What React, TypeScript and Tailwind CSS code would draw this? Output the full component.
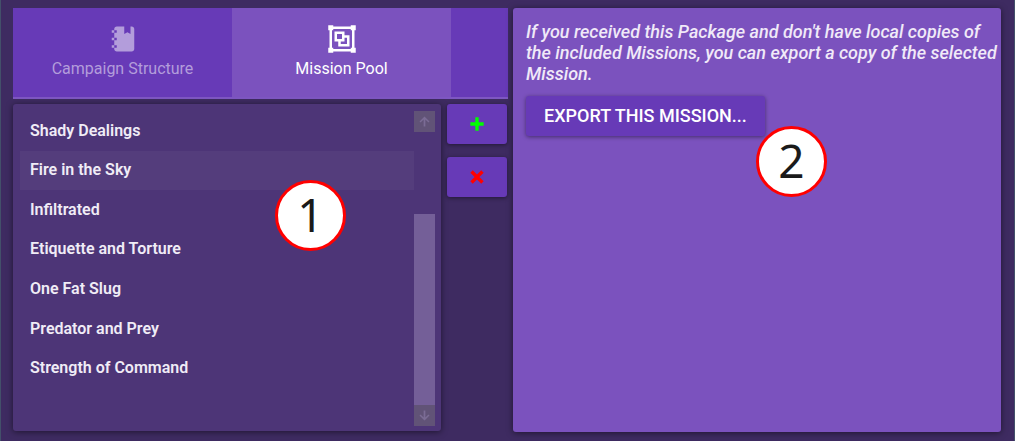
import { useState } from "react";

const missions = [
  "Shady Dealings",
  "Fire in the Sky",
  "Infiltrated",
  "Etiquette and Torture",
  "One Fat Slug",
  "Predator and Prey",
  "Strength of Command",
];

function Icon({ path, className }: { path: string; className: string }) {
  return (
    <svg viewBox="0 0 24 24" fill="currentColor" fillRule="evenodd" aria-hidden="true" className={className}>
      <path d={path} />
    </svg>
  );
}

const icons = {
  notebook:
    "M3,7V5H5V4C5,2.89 5.9,2 7,2H13V8L15.5,6.5L18,8V2H19C20.05,2 21,2.95 21,4V20C21,21.05 20.05,22 19,22H7C5.95,22 5,21.05 5,20V19H3V17H5V13H3V11H5V7H3M7,11H5V13H7V11M7,7V5H5V7H7M7,19V17H5V19H7Z",
  group:
    "M1,1H5V2H19V1H23V5H22V19H23V23H19V22H5V23H1V19H2V5H1V1M5,19V20H19V19H20V5H19V4H5V5H4V19H5M6,6H14V9H18V18H9V14H6V6M8,8V12H12V8H8M14,11V14H11V16H16V11H14Z",
  plus: "M20 14H14V20H10V14H4V10H10V4H14V10H20V14Z",
  close:
    "M20 6.91L17.09 4L12 9.09L6.91 4L4 6.91L9.09 12L4 17.09L6.91 20L12 14.91L17.09 20L20 17.09L14.91 12L20 6.91Z",
  up: "M13.4,20H10.6V8.8L5.7,13.7L4,12L12,4L20,12L18.3,13.7L13.4,8.8V20Z",
  down: "M10.6,4H13.4V15.2L18.3,10.3L20,12L12,20L4,12L5.7,10.3L10.6,15.2V4Z",
};

function Tab({ icon, label, active, onClick }: { icon: string; label: string; active: boolean; onClick: () => void }) {
  return (
    <button
      type="button"
      role="tab"
      aria-selected={active}
      onClick={onClick}
      className={
        "flex w-[219px] flex-col items-center pt-4 text-base leading-5 " +
        (active ? "bg-[#7b52be] text-white" : "text-[#b39ddb]")
      }
    >
      <Icon path={icon} className="mb-[5px] size-[30px]" />
      {label}
    </button>
  );
}

function Badge({ value, className }: { value: number; className: string }) {
  return (
    <span
      className={
        "absolute flex size-[71px] items-center justify-center rounded-full border-3 border-[#ff0000] bg-white pb-1 font-['Noto_Sans',sans-serif] text-[46px] leading-none text-[#1a1a1a] " +
        className
      }
    >
      {value}
    </span>
  );
}

const raised = "rounded-[3px] bg-[#673ab7] shadow-[0_1px_4px_rgba(0,0,0,0.45)]";

export default function App() {
  const [tab, setTab] = useState(1);
  const [selected, setSelected] = useState(1);

  return (
    <main className="flex min-h-screen gap-[5px] border-x border-[#43506a] bg-[#3e2b61] pt-2 pr-[13px] pb-[9px] pl-3 font-[Roboto,sans-serif]">
      <section className="flex w-[495px] shrink-0 flex-col gap-[5px] pb-px">
        <div role="tablist" className="flex h-[91px] border-b-2 border-[#7e57c2] bg-[#673ab7]">
          <Tab icon={icons.notebook} label="Campaign Structure" active={tab === 0} onClick={() => setTab(0)} />
          <Tab icon={icons.group} label="Mission Pool" active={tab === 1} onClick={() => setTab(1)} />
        </div>

        <div className="flex flex-1 gap-1.5 pr-px">
          <div className="relative flex flex-1 rounded-[3px] bg-[#4d3577] pt-[7px] pr-1.5 pb-[5px] pl-[7px] shadow-[0_1px_6px_rgba(0,0,0,0.5)]">
            <ul className="grid h-[277px] flex-1 grid-rows-7">
              {missions.map((name, i) => (
                <li key={name} className="flex">
                  <button
                    type="button"
                    aria-pressed={selected === i}
                    onClick={() => setSelected(i)}
                    className={
                      "flex-1 px-2.5 text-left text-base font-semibold text-[#f0ecf6] " +
                      (selected === i ? "bg-[#543d7c]" : "")
                    }
                  >
                    {name}
                  </button>
                </li>
              ))}
            </ul>
            <div className="flex w-[21px] flex-col">
              <button
                type="button"
                aria-label="Scroll up"
                className="flex h-[21px] items-center justify-center bg-[#615377] text-[#7b6c95]"
              >
                <Icon path={icons.up} className="size-[15px]" />
              </button>
              <div className="flex flex-1 flex-col justify-end">
                <div className="h-[70%] bg-[#745f98]" />
              </div>
              <button
                type="button"
                aria-label="Scroll down"
                className="flex h-[21px] items-center justify-center bg-[#615377] text-[#7b6c95]"
              >
                <Icon path={icons.down} className="size-[15px]" />
              </button>
            </div>
            <Badge value={1} className="top-[76px] left-[262px]" />
          </div>

          <div className="flex w-[60px] flex-col gap-[13px]">
            <button
              type="button"
              aria-label="Add mission"
              className={"flex h-10 items-center justify-center text-[#00ff00] " + raised}
            >
              <Icon path={icons.plus} className="size-5" />
            </button>
            <button
              type="button"
              aria-label="Remove mission"
              className={"flex h-10 items-center justify-center text-[#ff0000] " + raised}
            >
              <Icon path={icons.close} className="size-5" />
            </button>
          </div>
        </div>
      </section>

      <section className="relative flex-1 rounded-[3px] bg-[#7b52be] pt-[13px] pl-[13px] shadow-[0_1px_6px_rgba(0,0,0,0.5)]">
        <p className="text-lg leading-[21px] font-medium text-[#f0e9f8] italic">
          If you received this Package and don't have local copies of the included Missions, you can export a copy of
          the selected Mission.
        </p>
        <button type="button" className={"mt-3 h-10 px-[18px] text-lg font-medium text-white " + raised}>
          EXPORT THIS MISSION...
        </button>
        <Badge value={2} className="top-[118px] left-[243px]" />
      </section>
    </main>
  );
}
